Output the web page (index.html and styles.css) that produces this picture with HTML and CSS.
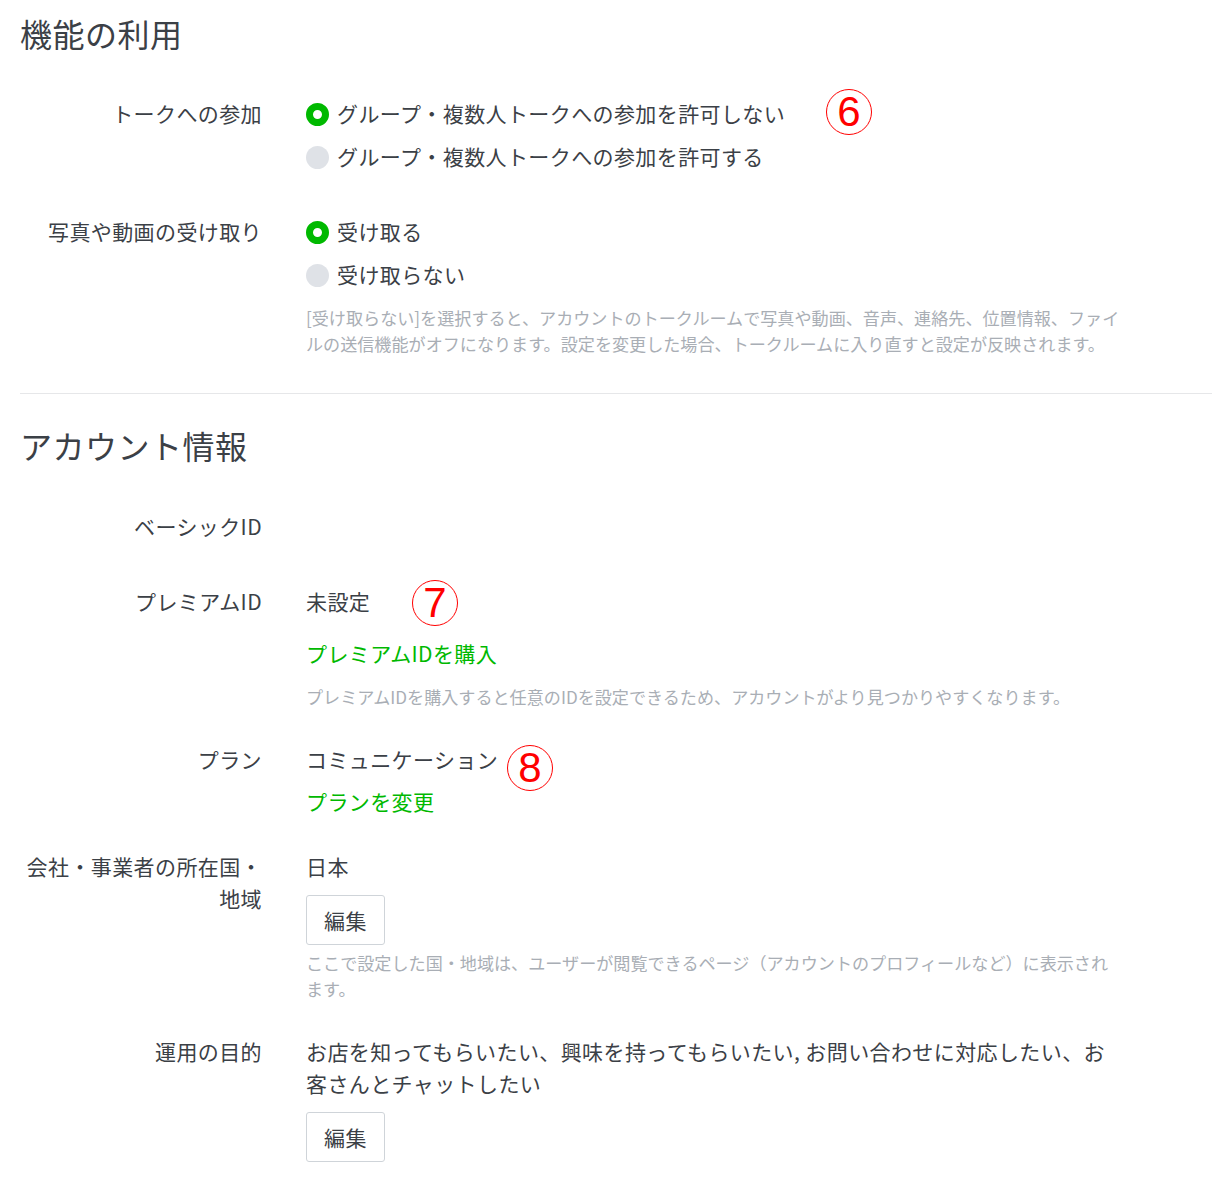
FILE: index.html
```html
<!DOCTYPE html>
<html lang="ja">
<head>
<meta charset="utf-8">
<title>設定</title>
<link rel="stylesheet" href="styles.css">
</head>
<body>
<div class="page">
  <h2 class="section-title">機能の利用</h2>

  <div class="field field-first">
    <div class="label">トークへの参加</div>
    <div class="value">
      <div class="radio-row checked">
        <span class="radio"></span><span class="radio-text">グループ・複数人トークへの参加を許可しない</span>
        <span class="mark mark-6">6</span>
      </div>
      <div class="radio-row">
        <span class="radio"></span><span class="radio-text">グループ・複数人トークへの参加を許可する</span>
      </div>
    </div>
  </div>

  <div class="field">
    <div class="label">写真や動画の受け取り</div>
    <div class="value">
      <div class="radio-row checked">
        <span class="radio"></span><span class="radio-text">受け取る</span>
      </div>
      <div class="radio-row">
        <span class="radio"></span><span class="radio-text">受け取らない</span>
      </div>
      <p class="note note-radio">[受け取らない]を選択すると、アカウントのトークルームで写真や動画、音声、連絡先、位置情報、ファイルの送信機能がオフになります。設定を変更した場合、トークルームに入り直すと設定が反映されます。</p>
    </div>
  </div>

  <hr class="divider">

  <h2 class="section-title section-title-2">アカウント情報</h2>

  <div class="field field-first2">
    <div class="label">ベーシックID</div>
    <div class="value"><div class="text"></div></div>
  </div>

  <div class="field">
    <div class="label">プレミアムID</div>
    <div class="value">
      <div class="text rel">未設定<span class="mark mark-7">7</span></div>
      <a class="link link-premium" href="#">プレミアムIDを購入</a>
      <p class="note note-premium">プレミアムIDを購入すると任意のIDを設定できるため、アカウントがより見つかりやすくなります。</p>
    </div>
  </div>

  <div class="field field-tight">
    <div class="label">プラン</div>
    <div class="value">
      <div class="text rel">コミュニケーション<span class="mark mark-8">8</span></div>
      <a class="link link-plan" href="#">プランを変更</a>
    </div>
  </div>

  <div class="field field-tight">
    <div class="label">会社・事業者の所在国・地域</div>
    <div class="value">
      <div class="text">日本</div>
      <button class="btn" type="button">編集</button>
      <p class="note note-country">ここで設定した国・地域は、ユーザーが閲覧できるページ（アカウントのプロフィールなど）に表示されます。</p>
    </div>
  </div>

  <div class="field field-tight">
    <div class="label">運用の目的</div>
    <div class="value">
      <div class="text">お店を知ってもらいたい、興味を持ってもらいたい, お問い合わせに対応したい、お客さんとチャットしたい</div>
      <button class="btn" type="button">編集</button>
    </div>
  </div>
</div>
</body>
</html>
```

FILE: styles.css
```css
* { box-sizing: border-box; }

html, body {
  margin: 0;
  padding: 0;
  background: #ffffff;
}

body {
  font-family: "Noto Sans CJK JP", "Noto Sans", sans-serif;
  color: #3b4046;
  font-size: 21px;
  line-height: 32px;
  letter-spacing: 0.4px;
}

.page {
  padding: 11px 18px 40px 20px;
  width: 1230px;
}

.section-title {
  margin: 0;
  font-size: 32px;
  line-height: 44px;
  font-weight: 400;
  color: #3b4046;
  letter-spacing: 0.5px;
}

.section-title-2 {
  margin-top: 29px;
}

.field {
  display: grid;
  grid-template-columns: 242px 816px;
  column-gap: 44px;
  margin-top: 43px;
}

.field-first { margin-top: 42px; }
.field-first2 { margin-top: 43px; }
.field-tight { margin-top: 33px; }

.label {
  text-align: right;
  color: #3b4046;
}

.value {
  display: flex;
  flex-direction: column;
  align-items: flex-start;
}

.text {
  min-height: 32px;
}

.rel { position: relative; }

.radio-row {
  position: relative;
  display: flex;
  align-items: center;
  height: 32px;
}

.radio-row + .radio-row {
  margin-top: 11px;
}

.radio {
  width: 23px;
  height: 23px;
  border-radius: 50%;
  background: #dfe2e7;
  flex: none;
  margin-right: 8px;
  margin-top: 2px;
}

.radio-row.checked .radio {
  background: #ffffff;
  border: 7px solid #00b900;
}

.note {
  margin: 0;
  font-size: 17.1px;
  line-height: 26px;
  letter-spacing: 0;
  color: #a9aeb5;
}

.note-radio { margin-top: 15px; }
.note-premium { margin-top: 15px; }
.note-country { margin-top: 5px; }

.link {
  color: #00b900;
  text-decoration: none;
}

.link-premium { margin-top: 20px; }
.link-plan { margin-top: 10px; }

.btn {
  margin-top: 13px;
  height: 50px;
  width: 79px;
  padding: 0;
  border: 1px solid #cfd4d9;
  border-radius: 3px;
  background: #ffffff;
  font-family: inherit;
  font-size: 21px;
  letter-spacing: 0.4px;
  color: #3b4046;
  line-height: 48px;
  text-align: center;
}

.divider {
  margin: 36px 0 0 0;
  border: 0;
  border-top: 1px solid #e6e7e9;
  width: 1192px;
}

.mark {
  position: absolute;
  width: 46px;
  height: 46px;
  border: 1.5px solid #ff0000;
  border-radius: 50%;
  color: #ff0000;
  font-family: "Liberation Sans", "Noto Sans", sans-serif;
  font-size: 42px;
  line-height: 43px;
  letter-spacing: 0;
  text-align: center;
}

.mark-6 { left: 520px; top: -8px; }
.mark-7 { left: 106px; top: -5px; }
.mark-8 { left: 201px; top: 2px; }
```
